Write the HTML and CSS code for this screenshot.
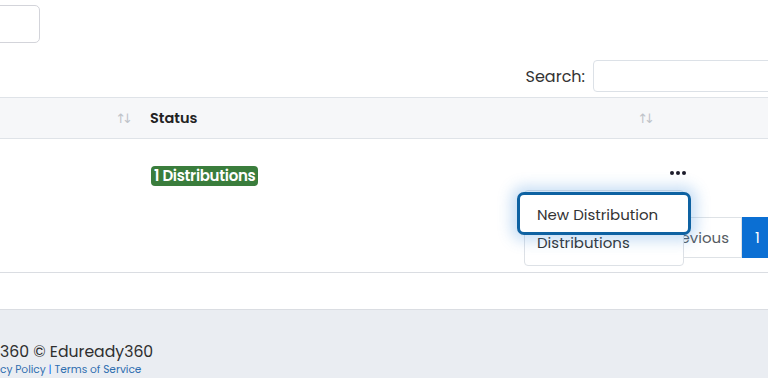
FILE: index.html
```html
<!DOCTYPE html>
<html>
<head>
<meta charset="utf-8">
<link rel="stylesheet" href="styles.css">
</head>
<body>
<div class="page">
  <div class="top-row">
    <div class="top-input"></div>
  </div>
  <div class="card">
    <div class="search-row">
      <label class="search-label">Search:</label>
      <div class="search-input"></div>
    </div>
    <div class="table">
      <div class="thead">
        <div class="th th-first"><span class="sort">↑↓</span></div>
        <div class="th th-status"><span class="th-label">Status</span><span class="sort">↑↓</span></div>
        <div class="th th-actions"></div>
      </div>
      <div class="trow">
        <div class="td td-first"></div>
        <div class="td td-status"><span class="badge">1 Distributions</span></div>
        <div class="td td-actions"><span class="dots"><i></i><i></i><i></i></span></div>
      </div>
    </div>
    <div class="pager">
      <div class="pager-left"><span class="pbtn">Previous</span></div>
      <div class="pager-right"><span class="pbtn active">1</span></div>
    </div>
    <div class="menu">
      <div class="menu-item focused">New Distribution</div>
      <div class="menu-item second">Distributions</div>
    </div>
  </div>
  <div class="footer">
    <div class="copy">360 © Eduready360</div>
    <div class="links"><a>cy Policy</a> <span class="sep">|</span> <a>Terms of Service</a></div>
  </div>
</div>
</body>
</html>
```
FILE: styles.css
```css
html, body {
  margin: 0;
  padding: 0;
  width: 768px;
  height: 378px;
  overflow: hidden;
  background: #fff;
}
body {
  font-family: "Poppins", "Open Sans", "Liberation Sans", sans-serif;
  color: #2b2b2b;
}
.page {
  width: 820px;
  position: relative;
}
.top-row {
  height: 43px;
  padding-top: 5px;
  box-sizing: border-box;
}
.top-input {
  margin-left: -160px;
  width: 200px;
  height: 38px;
  box-sizing: border-box;
  border: 1px solid #d3d4da;
  border-radius: 5px;
}
.card {
  border-bottom: 1px solid #dadde2;
  padding-bottom: 14px;
}
.search-row {
  display: flex;
  justify-content: flex-end;
  align-items: center;
  gap: 8px;
  margin-top: 17px;
  height: 32px;
}
.search-label {
  font-size: 16px;
  color: #333;
}
.search-input {
  width: 227px;
  height: 32px;
  box-sizing: border-box;
  border: 1px solid #dce1e7;
  border-radius: 4px;
}
.table {
  margin-top: 5px;
}
.thead, .trow {
  display: grid;
  grid-template-columns: 138px 522px 1fr;
}
.thead {
  height: 42px;
  box-sizing: border-box;
  background: #f6f7f9;
  border-top: 1px solid #dfe3e8;
  border-bottom: 1px solid #dfe3e8;
}
.th {
  display: flex;
  align-items: center;
  justify-content: space-between;
}
.th-first {
  justify-content: flex-end;
  padding-right: 5px;
}
.th-status {
  padding: 0 5px 0 12px;
}
.th-label {
  font-size: 14.5px;
  font-weight: 600;
  color: #222;
}
.sort {
  color: #bfc3c9;
  font-size: 13px;
  letter-spacing: -4px;
  padding-right: 4px;
  font-family: "DejaVu Sans", sans-serif;
}
.trow {
  height: 74px;
}
.td-status {
  display: flex;
  align-items: flex-start;
  padding: 27px 0 0 13px;
}
.badge {
  display: block;
  background: #3a7d3c;
  color: #fff;
  font-size: 15px;
  font-weight: 600;
  line-height: 20px;
  height: 20px;
  padding: 0 3px;
  border-radius: 4px;
  letter-spacing: -0.3px;
}
.td-actions {
  padding: 32px 0 0 10px;
}
.dots {
  display: flex;
  gap: 2px;
}
.dots i {
  width: 4px;
  height: 4px;
  border-radius: 50%;
  background: #1d1d2b;
}
.pager {
  display: grid;
  grid-template-columns: 742px auto;
  margin-top: 4px;
  height: 41px;
}
.pager-left {
  display: flex;
  justify-content: flex-end;
}
.pager-right {
  display: flex;
}
.pbtn {
  display: flex;
  align-items: center;
  height: 41px;
  box-sizing: border-box;
  padding: 0 12px;
  border: 1px solid #dee2e6;
  font-size: 15px;
  color: #555b62;
}
.pbtn.active {
  background: #0b6fd3;
  border-color: #0b6fd3;
  color: #fff;
  width: 26px;
  padding: 0 0 0 12px;
}
.menu {
  position: absolute;
  top: 190px;
  left: 524px;
  width: 160px;
  height: 76px;
  box-sizing: border-box;
  background: #fff;
  border: 1px solid #dde1e6;
  border-radius: 4px;
}
.menu-item {
  font-size: 15px;
  color: #333;
  padding-left: 12px;
}
.menu-item.focused {
  position: absolute;
  top: 1px;
  left: -8px;
  width: 174px;
  height: 43px;
  box-sizing: border-box;
  border: 3px solid #0e62a2;
  border-radius: 7px;
  background: #fff;
  display: flex;
  align-items: center;
  padding: 2px 0 0 17px;
  box-shadow: 0 0 14px 6px rgba(60, 140, 220, 0.28);
  z-index: 2;
}
.menu-item.second {
  padding-top: 42px;
  line-height: 20px;
}
.footer {
  margin-top: 36px;
  border-top: 1px solid #dadde2;
  background: #eaedf2;
  height: 80px;
  padding-top: 32px;
  box-sizing: border-box;
}
.copy {
  font-size: 15.7px;
  color: #2f2f2f;
  line-height: 20px;
}
.links {
  font-size: 10.6px;
  line-height: 16px;
  color: #2f6eb0;
}
.links a {
  color: #2f6eb0;
}
.sep {
  color: #0d6efd;
}
```
